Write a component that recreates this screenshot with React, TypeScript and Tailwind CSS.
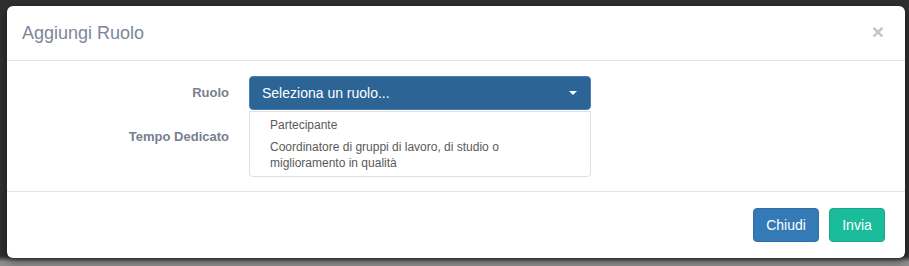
import React from "react";

// Modal "Aggiungi Ruolo" with the role select open
export default function App() {
  return (
    <div className="w-[909px] h-[266px] overflow-hidden bg-[linear-gradient(to_bottom,#2f2f2f_0px,#2f2f2f_256px,#8e8e8e_262px)] pt-[6px] pl-[7px] font-['Liberation_Sans',Arial,sans-serif]">
      <div className="relative w-[898px] h-[252px] bg-white rounded-[6px] shadow-[0_3px_9px_rgba(0,0,0,0.5)] flex flex-col">
        {/* Header */}
        <div className="h-[55px] border-b border-[#e5e5e5] flex items-center justify-between pl-[15px] pr-[21px]">
          <h4 className="text-[18px] text-[#7d8798] leading-none mt-[-1px]">Aggiungi Ruolo</h4>
          <span className="text-[#c4c4c4] text-[21px] font-bold leading-none mt-[-3px]">×</span>
        </div>

        {/* Body */}
        <div className="h-[131px] border-b border-[#e5e5e5] pt-[15px] flex flex-col gap-[10px]">
          <div className="flex items-center h-[34px]">
            <label className="w-[222px] text-right text-[13px] font-bold text-[#77808e]">Ruolo</label>
            <div className="relative ml-[20px] w-[342px]">
              <div className="h-[34px] rounded-[4px] bg-[#2b6495] border border-[#4a80b5] flex items-center justify-between pl-[12px] pr-[13px]">
                <span className="text-white text-[14px]">Seleziona un ruolo...</span>
                <span className="w-0 h-0 border-l-[4px] border-r-[4px] border-t-[4px] border-l-transparent border-r-transparent border-t-white" />
              </div>
              {/* Open dropdown list */}
              <ul className="absolute left-0 top-[35px] w-[342px] bg-white border border-[#dcdfe3] rounded-b-[4px] py-[2px] text-[12px] leading-[16px] text-[#5a5a5a] z-10">
                <li className="px-[20px] py-[3px]">Partecipante</li>
                <li className="px-[20px] py-[3px]">
                  Coordinatore di gruppi di lavoro, di studio o<br />miglioramento in qualità
                </li>
              </ul>
            </div>
          </div>
          <div className="flex items-center h-[34px]">
            <label className="w-[222px] text-right text-[13px] font-bold text-[#77808e]">Tempo Dedicato</label>
          </div>
        </div>

        {/* Footer */}
        <div className="flex-1 flex items-start justify-end gap-[10px] pt-[16px] pr-[20px]">
          <button className="h-[34px] w-[66px] rounded-[4px] bg-[#337ab7] border border-[#2e6da4] text-white text-[14px]">Chiudi</button>
          <button className="h-[34px] w-[56px] rounded-[4px] bg-[#1abc9c] border border-[#18a98c] text-white text-[14px]">Invia</button>
        </div>
      </div>
    </div>
  );
}
